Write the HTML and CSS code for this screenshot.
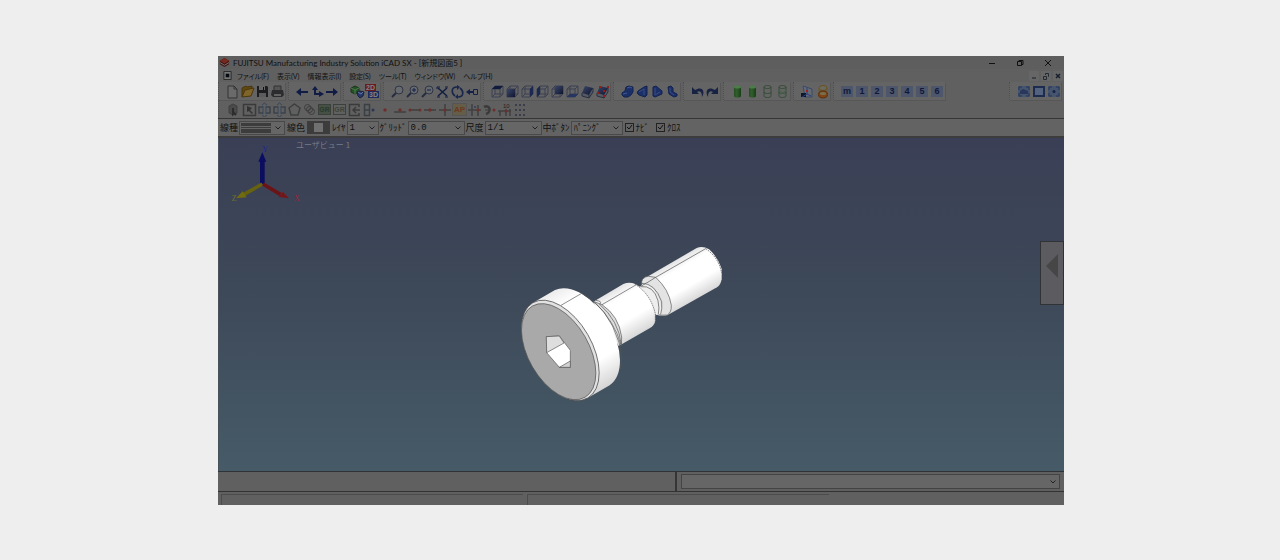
FILE: index.html
```html
<!DOCTYPE html>
<html lang="ja">
<head>
<meta charset="utf-8">
<title>FUJITSU Manufacturing Industry Solution iCAD SX</title>
<link rel="stylesheet" href="styles.css">
</head>
<body>
<svg class="defs" aria-hidden="true">
  <defs>
    <linearGradient id="blue" x1="0" y1="0" x2="1" y2="1"><stop offset="0" stop-color="#3c4769"/><stop offset="1" stop-color="#0e152f"/></linearGradient>
    <linearGradient id="green" x1="0" x2="1"><stop offset="0" stop-color="#244f22"/><stop offset=".4" stop-color="#315f2c"/><stop offset="1" stop-color="#183e17"/></linearGradient>
  </defs>
  <symbol id="new" viewBox="0 0 15 15"><path d="M3 2h6l3 3v9H3z" fill="#6a6a6a" stroke="#333"/><path d="M9 2v3h3" fill="none" stroke="#333"/></symbol>
  <symbol id="open" viewBox="0 0 15 15"><path d="M2 13V4l4-2 1 1 5-1v3" fill="#5f4812" stroke="#4a370c"/><path d="M2 13l3-7 9-2-3 8z" fill="#80652a" stroke="#4a370c"/></symbol>
  <symbol id="save" viewBox="0 0 15 15"><path d="M2 2h10l1 1v10H2z" fill="#1c1e20"/><path d="M4 2h6v4H4z" fill="#666"/><path d="M8 3h1v3H8z" fill="#111"/><path d="M4 9h7v4H4z" fill="#5c5c5c"/></symbol>
  <symbol id="print" viewBox="0 0 15 15"><path d="M4 2h7v5H4z" fill="#555" stroke="#333"/><path d="M2 6h11l1 5-2 2H3l-2-2z" fill="#2c2c2e"/><path d="M4 10h7v2H4z" fill="#626262"/></symbol>
  <symbol id="left" viewBox="0 0 15 15"><path d="M1 8l5-4v3h7v2H6v3z" fill="#101c46"/></symbol>
  <symbol id="right" viewBox="0 0 15 15"><path d="M13 8L8 4v3H1v2h7v3z" fill="#101c46"/></symbol>
  <symbol id="tree" viewBox="0 0 15 15"><path d="M5 5v5h5" fill="none" stroke="#101c46" stroke-width="2"/><path d="M2 6l3-4 3 4zM9 7l5 3-5 3z" fill="#101c46"/></symbol>
  <symbol id="parts" viewBox="0 0 15 15"><path d="M1 4l4-2 4 2v4l-4 2-4-2z" fill="#245424" stroke="#17351a"/><path d="M1 4l4 2 4-2M5 6v4" fill="none" stroke="#527550"/><path d="M7 8l3-1 4 1-1 4-3 2-2-2z" fill="#27396a" stroke="#17213e"/><path d="M8 8l3 2 2-2" fill="none" stroke="#6472a0"/></symbol>
  <symbol id="lens" viewBox="0 0 15 15"><circle cx="9" cy="6" r="4" fill="#666a6e" stroke="#2f3545"/><path d="M6 9l-4 4" stroke="#252c40" stroke-width="2"/></symbol>
  <symbol id="plus" viewBox="0 0 15 15"><use href="#lens"/><path d="M7 6h4M9 4v4" stroke="#14204c"/></symbol>
  <symbol id="minus" viewBox="0 0 15 15"><use href="#lens"/><path d="M7 6h4" stroke="#14204c"/></symbol>
  <symbol id="fit" viewBox="0 0 15 15"><path d="M3 4l9 8M12 4l-9 8" stroke="#111c42" stroke-width="1.5"/><path d="M2 3h3M2 3v2M13 3h-3M2 13h3M13 13h-3" stroke="#111c42"/></symbol>
  <symbol id="turn" viewBox="0 0 15 15"><path d="M7 3C1 3 1 9 5 12M8 13c6 0 6-6 2-9" fill="none" stroke="#1a254c" stroke-width="1.6"/><path d="M7 1l3 2-3 3zM8 15l-3-2 3-3z" fill="#1a254c"/></symbol>
  <symbol id="pan" viewBox="0 0 15 15"><path d="M1 8l4-3v2h4v2H5v2z" fill="#15214a"/><path d="M8.500 5.500h4v5h-4z" fill="#666" stroke="#15214a"/></symbol>
  <symbol id="cube" viewBox="0 0 15 15"><path d="M2 5l3-3h8v8l-3 3H2zM2 5h8v8M10 5l3-3M5 2v8h8M5 10l-3 3" fill="none" stroke="#3b4150"/></symbol>
  <symbol id="ctop" viewBox="0 0 15 15"><use href="#cube"/><path d="M2 5l3-3h8l-3 3z" fill="#111b3e"/></symbol>
  <symbol id="cfront" viewBox="0 0 15 15"><use href="#cube"/><path d="M2 5h8v8H2z" fill="url(#blue)"/></symbol>
  <symbol id="cright" viewBox="0 0 15 15"><use href="#cube"/><path d="M10 5l3-3v8l-3 3z" fill="#1b2854"/></symbol>
  <symbol id="cleft" viewBox="0 0 15 15"><use href="#cube"/><path d="M2 5l3-3v8l-3 3z" fill="#1b2854"/></symbol>
  <symbol id="cback" viewBox="0 0 15 15"><use href="#cube"/><path d="M5 2h8v8H5z" fill="url(#blue)"/></symbol>
  <symbol id="cbottom" viewBox="0 0 15 15"><use href="#cube"/><path d="M2 13l3-3h8l-3 3z" fill="#263561"/></symbol>
  <symbol id="face" viewBox="0 0 15 15"><path d="M2 9v3l7 2 4-6V4M9 11v3" fill="#555a64" stroke="#292f42"/><path d="M5 2l8 2-4 7-7-2z" fill="url(#blue)"/></symbol>
  <symbol id="facer" viewBox="0 0 15 15"><use href="#face"/><path d="M4 2h2v2H4zM12 2h2v2h-2zM2 8h2v2H2zM8 11h2v2H8zM8 6h2v2H8z" fill="#941e1a"/></symbol>
  <symbol id="solid" viewBox="0 0 15 15"><path d="M6 3l3-1 4 1v5l-2 3-3 2H4l-2-2V9l3-2z" fill="#1b2f69" stroke="#15234f"/><path d="M7 4l3-1 2 1M3 10l4-1" fill="none" stroke="#435791"/></symbol>
  <symbol id="solid2" viewBox="0 0 15 15"><path d="M3 7l6-4 3-1v9l-2 2-6-2-2-2z" fill="#1b2f69" stroke="#15234f"/><path d="M4 8l5-3v6" fill="none" stroke="#3a4d80"/></symbol>
  <symbol id="solid3" viewBox="0 0 15 15"><path d="M3 3l3-1 6 5v3l-7 3-2-1z" fill="#1b2f69" stroke="#15234f"/><path d="M5 4v7l5-3" fill="none" stroke="#3a4d80"/></symbol>
  <symbol id="solid4" viewBox="0 0 15 15"><path d="M3 3l3-1 2 2v4l4 2v2l-3 1-5-3z" fill="#1b2f69" stroke="#15234f"/><path d="M5 4v4l4 3" fill="none" stroke="#3a4d80"/></symbol>
  <symbol id="undo" viewBox="0 0 15 15"><path d="M2 3v7h7L7 8c3-2 5 0 5 5 4-7-1-11-7-7z" fill="#182344"/></symbol>
  <symbol id="redo" viewBox="0 0 15 15"><path d="M13 3v7H6l2-2c-3-2-5 0-5 5-4-7 1-11 7-7z" fill="#182344"/></symbol>
  <symbol id="cyl" viewBox="0 0 15 15"><path d="M4 3v9c0 2 7 2 7 0V3z" fill="url(#green)"/><ellipse cx="7.500" cy="3" rx="3.500" ry="1.500" fill="#4b7d48"/></symbol>
  <symbol id="cylo" viewBox="0 0 15 15"><path d="M4 3v9c0 2 7 2 7 0V3c0-2-7-2-7 0s7 2 7 0M4 8c0 2 7 2 7 0" fill="none" stroke="#344b36"/></symbol>
  <symbol id="cylx" viewBox="0 0 15 15"><use href="#cylo"/><path d="M4 6l7 5M4 11l7-5" stroke="#466348"/></symbol>
  <symbol id="axis" viewBox="0 0 15 15"><path d="M3 2l9 3v8H5z" fill="#666a72" stroke="#394b6c"/><path d="M1 9h5v4H1z" fill="#0e162c"/><path d="M7 4v6l4 2M7 10l-5 3" stroke="#293f7c" fill="none"/><path d="M6 6h2v2H6z" fill="#9a2520"/></symbol>
  <symbol id="rings" viewBox="0 0 15 15"><path d="M4 4v3c0 2 8 2 8 0V4" fill="none" stroke="#6d562d"/><ellipse cx="8" cy="4" rx="4" ry="2.500" fill="#6a6a60" stroke="#6f501f"/><ellipse cx="8" cy="10.500" rx="4.500" ry="3.500" fill="#7e4415" stroke="#5c310e"/><ellipse cx="8" cy="9.500" rx="3" ry="1.500" fill="#77704f"/></symbol>
  <symbol id="screen" viewBox="0 0 15 15"><path d="M2 2h12v11H2z" fill="#46546c"/><path d="M3 6V3h3M10 3h3v3M13 9v3h-3M6 12H3V9" fill="none" stroke="#23345c"/><path d="M4 7l3-2 5 2v3H4z" fill="#28385d"/></symbol>
  <symbol id="screen2" viewBox="0 0 15 15"><path d="M3 3h10v9H3z" fill="#53627e" stroke="#1d2b4e" stroke-width="2"/></symbol>
  <symbol id="screen3" viewBox="0 0 15 15"><path d="M2 2h12v11H2z" fill="#46546c"/><path d="M3 6V3h3M10 3h3v3M13 9v3h-3M6 12H3V9" fill="none" stroke="#23345c"/><circle cx="8" cy="7.500" r="1.500" fill="#162347"/></symbol>
  <symbol id="pick" viewBox="0 0 15 15"><path d="M4 4l4-2 4 2v7l-4 2-4-2z" fill="#4a4a4a" stroke="#404040"/><path d="M8 6v6l1-1 2 2" stroke="#2d2d2d" fill="none" stroke-width="2"/></symbol>
  <symbol id="cursor" viewBox="0 0 15 15"><path d="M1.500 2.500h12v11h-12z" fill="none" stroke="#3a3a3a" stroke-width="1.500"/><path d="M5 4v6l2-1 3 3 1-1-3-3 2-2z" fill="#333"/></symbol>
  <symbol id="mirror" viewBox="0 0 15 15"><path d="M6 5H2v6h4M9 5h4v6H9" fill="none" stroke="#3b424b" stroke-width="1.500"/><path d="M5 3l2.500-2L10 3M5 13l2.500 2 2.500-2M6 4v8M9 4v8" fill="none" stroke="#36465c"/></symbol>
  <symbol id="penta" viewBox="0 0 15 15"><path d="M7.500 2L13 6l-2 7H4L2 6z" fill="none" stroke="#3c403d" stroke-width="1.500"/></symbol>
  <symbol id="chain" viewBox="0 0 15 15"><g fill="none" stroke="#3c3c3c"><circle cx="5.500" cy="5.500" r="3"/><circle cx="7.500" cy="7.500" r="3"/><circle cx="9.500" cy="9.500" r="3"/></g></symbol>
  <symbol id="enter" viewBox="0 0 15 15"><path d="M12 5V2.500H2.500v11H12V11M13 8H6m3-3L6 8l3 3" fill="none" stroke="#3a3a3a" stroke-width="1.500"/></symbol>
  <symbol id="door" viewBox="0 0 15 15"><path d="M2.500 2.500h5v11h-5zM2 8h6" fill="none" stroke="#3a3f46" stroke-width="1.500"/><circle cx="11" cy="8" r="1.500" fill="#2a3454"/></symbol>
  <symbol id="dot" viewBox="0 0 15 15"><circle cx="8" cy="8" r="1.700" fill="#6b302c"/></symbol>
  <symbol id="base" viewBox="0 0 15 15"><path d="M2 10h12" stroke="#3f3f3f" stroke-width="1.500"/><circle cx="8" cy="8" r="1.700" fill="#6b302c"/></symbol>
  <symbol id="ends" viewBox="0 0 15 15"><path d="M2 8h12" stroke="#3f3f3f" stroke-width="1.500"/><circle cx="3" cy="8" r="1.500" fill="#6b302c"/><circle cx="13" cy="8" r="1.500" fill="#6b302c"/></symbol>
  <symbol id="mid" viewBox="0 0 15 15"><path d="M2 8h12" stroke="#3f3f3f" stroke-width="1.500"/><circle cx="8" cy="8" r="1.700" fill="#6b302c"/></symbol>
  <symbol id="cross" viewBox="0 0 15 15"><path d="M2 8h12M8 2v12" stroke="#3f3f3f" stroke-width="1.500"/><circle cx="8" cy="8" r="1.500" fill="#6b302c"/></symbol>
  <symbol id="cross2" viewBox="0 0 15 15"><path d="M1 8h13M5 2v12M11 3v11" stroke="#3f3f3f" stroke-width="1.500"/><circle cx="8" cy="5" r="1" fill="#303c67"/><circle cx="11" cy="8" r="1.500" fill="#6b302c"/></symbol>
  <symbol id="arc" viewBox="0 0 15 15"><path d="M2 5c6-3 8 5 2 7" fill="none" stroke="#3a3a3a" stroke-width="2.500"/><path d="M3 8h4" stroke="#3a3a3a"/><circle cx="12" cy="8" r="1.500" fill="#6b302c"/></symbol>
  <symbol id="grid" viewBox="0 0 15 15"><path d="M3 3h10M3 8h10M3 13h10" stroke="#3a3e4a" stroke-width="2" stroke-dasharray="2 2"/></symbol>
</svg>

<main class="app">
  <header class="title">
    <svg class="logo" viewBox="0 0 12 12" aria-hidden="true"><path d="M1 4l5-3 5 3v4l-5 3-5-3z" fill="#411616"/><path d="M1 4l5-3 5 3-5 3z" fill="#752a1d"/><path d="M1 6l5 3 5-3" fill="none" stroke="#777"/></svg>
    <h1>FUJITSU Manufacturing Industry Solution iCAD SX - [新規図面5 ]</h1>
    <div class="winbtns">
      <button aria-label="最小化"><svg viewBox="0 0 10 10"><path d="M2 5.500h6" stroke="#111"/></svg></button>
      <button aria-label="元に戻す"><svg viewBox="0 0 10 10"><path d="M2.500 3.500h4v4h-4zM4 3.500v-1h4v4H7" fill="none" stroke="#111"/></svg></button>
      <button aria-label="閉じる"><svg viewBox="0 0 10 10"><path d="M2 2l6 6M8 2L2 8" stroke="#111"/></svg></button>
    </div>
  </header>
  <nav class="menu">
    <svg class="doc" viewBox="0 0 10 10" aria-hidden="true"><path d="M1 .5h8v9H1z" fill="#777" stroke="#222"/><path d="M3 3h4v4H3z" fill="#050a12"/></svg>
    <button>ファイル(F)</button><button>表示(V)</button><button>情報表示(I)</button><button>設定(S)</button><button>ツール(T)</button><button>ウィンドウ(W)</button><button>ヘルプ(H)</button>
    <div class="docbtns">
      <button aria-label="図面を最小化"><svg viewBox="0 0 10 10"><path d="M3 7h4" stroke="#15202c"/></svg></button>
      <button aria-label="図面を元に戻す"><svg viewBox="0 0 10 10"><path d="M2.500 5.500h3v3h-3zM4.500 4V2.500h3v3H7" fill="none" stroke="#222a33"/></svg></button>
      <button aria-label="図面を閉じる"><svg viewBox="0 0 10 10"><path d="M3 3l4 4M7 3L3 7" stroke="#15202c" stroke-width="1.500"/></svg></button>
    </div>
  </nav>
  <div class="tools" role="toolbar" aria-label="標準">
    <div class="group"><button aria-label="新規"><svg><use href="#new"/></svg></button><button aria-label="開く"><svg><use href="#open"/></svg></button><button aria-label="保存"><svg><use href="#save"/></svg></button><button aria-label="印刷"><svg><use href="#print"/></svg></button></div>
    <div class="group"><button aria-label="前へ"><svg><use href="#left"/></svg></button><button aria-label="ツリー"><svg><use href="#tree"/></svg></button><button aria-label="次へ"><svg><use href="#right"/></svg></button></div>
    <div class="group"><button aria-label="パーツ"><svg><use href="#parts"/></svg></button><button class="dims"><span>2D</span><span>3D</span></button></div>
    <div class="group"><button aria-label="ズーム"><svg><use href="#lens"/></svg></button><button aria-label="拡大"><svg><use href="#plus"/></svg></button><button aria-label="縮小"><svg><use href="#minus"/></svg></button><button aria-label="全体"><svg><use href="#fit"/></svg></button><button aria-label="回転"><svg><use href="#turn"/></svg></button><button aria-label="移動"><svg><use href="#pan"/></svg></button></div>
    <div class="group"><button aria-label="上面"><svg><use href="#ctop"/></svg></button><button aria-label="正面"><svg><use href="#cfront"/></svg></button><button aria-label="右面"><svg><use href="#cright"/></svg></button><button aria-label="左面"><svg><use href="#cleft"/></svg></button><button aria-label="背面"><svg><use href="#cback"/></svg></button><button aria-label="下面"><svg><use href="#cbottom"/></svg></button><button aria-label="指定面"><svg><use href="#face"/></svg></button><button aria-label="三点面"><svg><use href="#facer"/></svg></button></div>
    <div class="group"><button aria-label="立体 1"><svg><use href="#solid"/></svg></button><button aria-label="立体 2"><svg><use href="#solid2"/></svg></button><button aria-label="立体 3"><svg><use href="#solid3"/></svg></button><button aria-label="立体 4"><svg><use href="#solid4"/></svg></button></div>
    <div class="group"><button aria-label="元に戻す"><svg><use href="#undo"/></svg></button><button aria-label="やり直し"><svg><use href="#redo"/></svg></button></div>
    <div class="group"><button aria-label="シェーディング"><svg><use href="#cyl"/></svg></button><button aria-label="稜線付き"><svg><use href="#cyl"/></svg></button><button aria-label="隠線"><svg><use href="#cylo"/></svg></button><button aria-label="ワイヤ"><svg><use href="#cylx"/></svg></button></div>
    <div class="group"><button aria-label="座標"><svg><use href="#axis"/></svg></button><button aria-label="リング"><svg><use href="#rings"/></svg></button></div>
    <div class="group"><button><span class="num">m</span></button><button><span class="num">1</span></button><button><span class="num">2</span></button><button><span class="num">3</span></button><button><span class="num">4</span></button><button><span class="num">5</span></button><button><span class="num">6</span></button></div>
    <div class="group last"><button aria-label="画面 1"><svg><use href="#screen"/></svg></button><button aria-label="画面 2"><svg><use href="#screen2"/></svg></button><button aria-label="画面 3"><svg><use href="#screen3"/></svg></button></div>
  </div>
  <div class="tools snaps" role="toolbar" aria-label="選択">
    <div class="group"><button aria-label="要素選択"><svg><use href="#pick"/></svg></button></div>
    <div class="snapset"><button aria-label="矩形選択"><svg><use href="#cursor"/></svg></button><button aria-label="対称 1"><svg><use href="#mirror"/></svg></button><button aria-label="対称 2"><svg><use href="#mirror"/></svg></button><button aria-label="多角形"><svg><use href="#penta"/></svg></button><button aria-label="連結"><svg><use href="#chain"/></svg></button><button><span class="gr dark">GR</span></button><button><span class="gr">GR</span></button><button aria-label="戻る"><svg><use href="#enter"/></svg></button><button aria-label="部品"><svg><use href="#door"/></svg></button><button aria-label="点"><svg><use href="#dot"/></svg></button><button aria-label="線上"><svg><use href="#base"/></svg></button><button aria-label="端点"><svg><use href="#ends"/></svg></button><button aria-label="中点"><svg><use href="#mid"/></svg></button><button aria-label="交点"><svg><use href="#cross"/></svg></button><button><span class="ap">AP</span></button><button aria-label="仮想交点"><svg><use href="#cross2"/></svg></button><button aria-label="中心"><svg><use href="#arc"/></svg></button><button><svg viewBox="0 0 15 15"><path d="M1 9h13M3 9v5M9 7v7M13 7v7" stroke="#3f3f3f" stroke-width="1.500"/><circle cx="9" cy="9" r="1.500" fill="#6b302c"/><text x="6" y="6" class="ten">10</text></svg></button><button aria-label="格子"><svg><use href="#grid"/></svg></button></div>
  </div>
  <form class="props">
    <label for="ltype">線種</label><select id="ltype" class="ltype"><option label=" "></option></select>
    <label for="lcolor">線色</label><button type="button" id="lcolor" class="swatch"></button>
    <label for="layer">ﾚｲﾔ</label><select id="layer" class="w32"><option>1</option></select>
    <label for="gridsize">ｸﾞﾘｯﾄﾞ</label><select id="gridsize" class="w58"><option>0.0</option></select>
    <label for="scale">尺度</label><select id="scale" class="w58"><option>1/1</option></select>
    <label for="middle">中ﾎﾞﾀﾝ</label><select id="middle" class="w52"><option>ﾊﾟﾆﾝｸﾞ</option></select>
    <label class="check"><input type="checkbox" checked>ﾅﾋﾞ</label>
    <label class="check"><input type="checkbox" checked>ｸﾛｽ</label>
  </form>
  <section class="view">
    <svg class="axes" viewBox="6 9 444 231" aria-label="座標軸">
      <path d="M139 147v-70" stroke="#0b0d5e" stroke-width="14"/><path d="M139 52l12 28h-24z" fill="#0b0d62"/>
      <path d="M139 147l-56 32" stroke="#66620f" stroke-width="11"/><path d="M60 190l20-21 12 18z" fill="#716c10"/>
      <path d="M141 147l52 31" stroke="#6b1417" stroke-width="11"/><path d="M219 190l-31-4 12-16z" fill="#75161a"/>
      <text x="139" y="51" fill="#20249a">Y</text><text x="47" y="197" fill="#74722a">Z</text><text x="234" y="197" fill="#9c2636">X</text>
    </svg>
    <span class="viewname">ユーザビュー 1</span>
    <svg class="bolt" viewBox="0 0 675 525" role="img" aria-label="六角穴付きボルト">
      <defs>
        <linearGradient id="head" gradientUnits="userSpaceOnUse" x1="135" y1="162" x2="299" y2="448"><stop offset="0" stop-color="#ececec"/><stop offset=".15" stop-color="#fff"/><stop offset=".75" stop-color="#fff"/><stop offset="1" stop-color="#d4d4d4"/></linearGradient>
        <linearGradient id="shank" gradientUnits="userSpaceOnUse" x1="344" y1="143" x2="420" y2="275"><stop offset="0" stop-color="#e4e4e4"/><stop offset=".2" stop-color="#fff"/><stop offset=".65" stop-color="#fff"/><stop offset="1" stop-color="#d8d8d8"/></linearGradient>
        <linearGradient id="pin" gradientUnits="userSpaceOnUse" x1="555" y1="40" x2="621" y2="154"><stop offset="0" stop-color="#e4e4e4"/><stop offset=".2" stop-color="#fff"/><stop offset=".65" stop-color="#fff"/><stop offset="1" stop-color="#d8d8d8"/></linearGradient>
      </defs>
      <path d="M404 127L560 36Q578 29 597 40Q622 61 635 98V130Q632 147 621 154L472 238Q456 241 438 236z" fill="url(#pin)"/>
      <path d="M395 137Q398 123 415 121L437 124Q477 160 484 208Q485 229 472 237Q455 240 438 233Q445 190 395 149z" fill="#e3e3e3" stroke="#555" stroke-width="2"/>
      <path d="M388 152l22-12q43 31 45 94l-18 2z" fill="#eee"/>
      <path d="M395 142q40-1 60 55 2 22-3 38M391 152q40-5 53 42 5 23 1 40M410 141l27-17L587 38M395 150l15-10" fill="none" stroke="#4d4d4d" stroke-width="2"/>
      <path d="M587 38q39 26 48 73" fill="none" stroke="#333" stroke-width="2" stroke-dasharray="5 3"/>
      <path d="M250 197L340 144Q357 136 376 144Q419 167 436 233V255Q433 269 420 276L326 330z" fill="url(#shank)"/>
      <path d="M374 144q47 28 62 89v28" fill="none" stroke="#4d4d4d" stroke-width="2" stroke-dasharray="5 2"/>
      <path d="M252 197l24 9q50 33 59 97l-1 27q-20-75-82-133z" fill="#ddd" stroke="#555" stroke-width="2"/>
      <path d="M268 204q58 50 66 122M276 206l103-60M257 193q20 2 13 11" fill="none" stroke="#555" stroke-width="2"/>
      <path d="M69 200L135 162A165 95 60 0 1 299 448L233 486z" fill="url(#head)"/>
      <ellipse cx="151" cy="343" rx="165" ry="95" transform="rotate(60 151 343)" fill="#e2e2e2" stroke="#444" stroke-width="2"/>
      <ellipse cx="146" cy="347" rx="158" ry="91" transform="rotate(60 146 347)" fill="#a9a9a9" stroke="#555" stroke-width="2"/>
      <path d="M153 208l62-36q79 41 112 147 12 39 4 80" fill="none" stroke="#555" stroke-width="2"/>
      <path d="M109 302l39-2 33 43v51h-33l-38-44z" fill="#fff" stroke="#555" stroke-width="2"/>
      <path d="M109 302l39-2 14 21-52 29z" fill="#dedede" stroke="#555" stroke-width="2"/>
      <path d="M148 394l33-19v19z" fill="#d0d0d0" stroke="#555" stroke-width="2"/>
    </svg>
    <button class="drawer" aria-label="パネルを開く"><svg viewBox="0 0 12 24"><path d="M12 0v24L0 12z" fill="#464646"/></svg></button>
  </section>
  <div class="command"><output class="message"></output><div class="entry"><select aria-label="コマンド"><option label=" "></option></select></div></div>
  <footer class="status"><span></span><span></span></footer>
</main>
</body>
</html>
```
FILE: styles.css
```css
* { box-sizing: border-box; }
body {
  margin: 0;
  min-height: 100vh;
  display: flex;
  padding: 56px 216px 55px 218px;
  background: #eee;
  color: #111;
  font: 8px/12px Lato, "Noto Sans CJK JP", sans-serif;
}
button, select, input { font: inherit; color: inherit; margin: 0; padding: 0; border: 0; background: none; }
.defs { position: absolute; width: 0; height: 0; }
.app { flex: 1; min-width: 0; display: flex; flex-direction: column; background: #606060; overflow: hidden; }

.title { display: flex; align-items: center; height: 13px; padding-left: 1px; background: #5e5e5e; }
.logo { width: 11px; height: 11px; margin-right: 3px; }
.title h1 { margin: 0; font-size: 8px; font-weight: 400; white-space: nowrap; }
.winbtns { margin-left: auto; display: flex; gap: 18px; padding-right: 11px; }
.winbtns button, .docbtns button { display: block; width: 10px; height: 10px; }
.winbtns svg, .docbtns svg { display: block; width: 10px; height: 10px; }

.menu { display: flex; align-items: center; gap: 8px; height: 13px; padding-left: 5px; white-space: nowrap; font-size: 7px; font-feature-settings: "palt"; }
.menu .doc { width: 9px; height: 9px; margin-right: -3px; }
.docbtns { margin-left: auto; display: flex; gap: 2px; padding-right: 1px; }
.docbtns button { background: #666; }

.tools { display: flex; height: 18px; }
.group { display: flex; align-items: center; padding-left: 6px; margin-right: 3px; border-left: 1px dotted #505050; background: #646464; box-shadow: 1px 1px 0 #575757; }
.group.last { margin-left: auto; }
.tools button { display: block; width: 15px; height: 15px; }
.tools svg { display: block; width: 15px; height: 15px; }
.snaps .group { background: none; box-shadow: none; margin-right: 2px; }
.snapset { display: flex; align-items: center; }
.tools span { display: block; font-family: "Liberation Sans", sans-serif; font-weight: 700; text-align: center; }
.num { width: 12px; height: 11px; margin: 2px 1px; background: #4d566a; color: #10183a; font-size: 9px; line-height: 11px; }
.dims span { width: 11px; height: 7px; background: #6a1d1d; color: #858585; font-size: 7px; line-height: 7px; }
.dims span + span { margin-left: 3px; background: #1d2b5c; }
.gr { height: 11px; margin: 2px 1px; border: 1px solid #3a403a; color: #3a4539; font-size: 7px; line-height: 9px; }
.gr.dark { background: #465045; color: #2b3a2b; }
.ap { height: 13px; margin: 1px 0; border: 1px solid #555; background: #665d48; color: #6b3a20; font-size: 8px; line-height: 11px; }
.ten { font: 6px "Liberation Sans", sans-serif; fill: #222; }

.props { display: flex; align-items: center; gap: 1px; height: 20px; padding-left: 2px; border-top: 1px solid #353535; border-bottom: 2px solid #3c3c3c; background: #636363; font-family: "Noto Sans CJK JP", sans-serif; font-size: 9px; white-space: nowrap; }
select {
  appearance: none;
  height: 14px;
  padding-left: 2px;
  border: 1px solid #494949;
  border-radius: 0;
  background: #666 url("data:image/svg+xml,%3Csvg xmlns='http://www.w3.org/2000/svg' width='6' height='4'%3E%3Cpath d='M.5.5L3 3 5.500.5' fill='none' stroke='%23222'/%3E%3C/svg%3E") no-repeat right 3px center;
}
.w32 { width: 32px; }
.w58 { width: 57px; }
.w52 { width: 52px; }
.w32, .w58 { font-family: "Liberation Mono", monospace; }
.props .ltype {
  width: 46px;
  margin-right: 1px;
  background:
    url("data:image/svg+xml,%3Csvg xmlns='http://www.w3.org/2000/svg' width='6' height='4'%3E%3Cpath d='M.5.5L3 3 5.500.5' fill='none' stroke='%23222'/%3E%3C/svg%3E") no-repeat right 3px center,
    linear-gradient(#3c3c3c 3px, #666 3px, #666 4px, #3c3c3c 4px, #3c3c3c 5px, #666 5px, #666 6px, #3c3c3c 6px) no-repeat 1px 1px / 30px 10px,
    #666;
}
.props .swatch { width: 23px; height: 13px; margin: 0 1px; border: 2px solid #3c3c3c; border-width: 2px 7px; background: #707070; }
.check { display: flex; align-items: center; gap: 2px; margin: 0 5px 0 1px; }
.check input { appearance: none; width: 9px; height: 9px; border: 1px solid #222; background: url("data:image/svg+xml,%3Csvg xmlns='http://www.w3.org/2000/svg' viewBox='0 0 7 7'%3E%3Cpath d='M1 3l2 2 3-4' fill='none' stroke='%23111'/%3E%3C/svg%3E") center / 7px 7px no-repeat; }

.view { position: relative; flex: 1; min-height: 320px; background: linear-gradient(#3a3f55, #3d4858 45%, #465b67); border-left: 1px solid #49525c; }
.axes { position: absolute; left: -1px; top: 0; width: 148px; height: 77px; }
.axes text { font: 24px "Liberation Serif", serif; }
.viewname { position: absolute; left: 77px; top: 1px; color: #777c86; font-family: "Noto Sans CJK JP", sans-serif; }
.bolt { position: absolute; left: calc(50% - 132px); top: 98px; width: 225px; height: 175px; }
.drawer { position: absolute; right: 0; top: 103px; display: grid; place-items: center; width: 24px; height: 64px; border: 1px solid #303236; background: #5c5c60; }
.drawer svg { width: 12px; height: 24px; margin-bottom: 14px; }

.command { display: grid; grid-template-columns: 459fr 387fr; height: 21px; border-top: 1px solid #303436; border-bottom: 1px solid #333; }
.message { border-right: 2px solid #353535; }
.entry { display: flex; align-items: center; padding: 0 4px; }
.entry select { flex: 1; height: 15px; border-color: #444; }
.status { display: flex; gap: 4px; height: 13px; padding: 2px 0 0 3px; }
.status span { width: 302px; border: 1px solid #4c4c4c; border-width: 1px 0 0 1px; }
```
